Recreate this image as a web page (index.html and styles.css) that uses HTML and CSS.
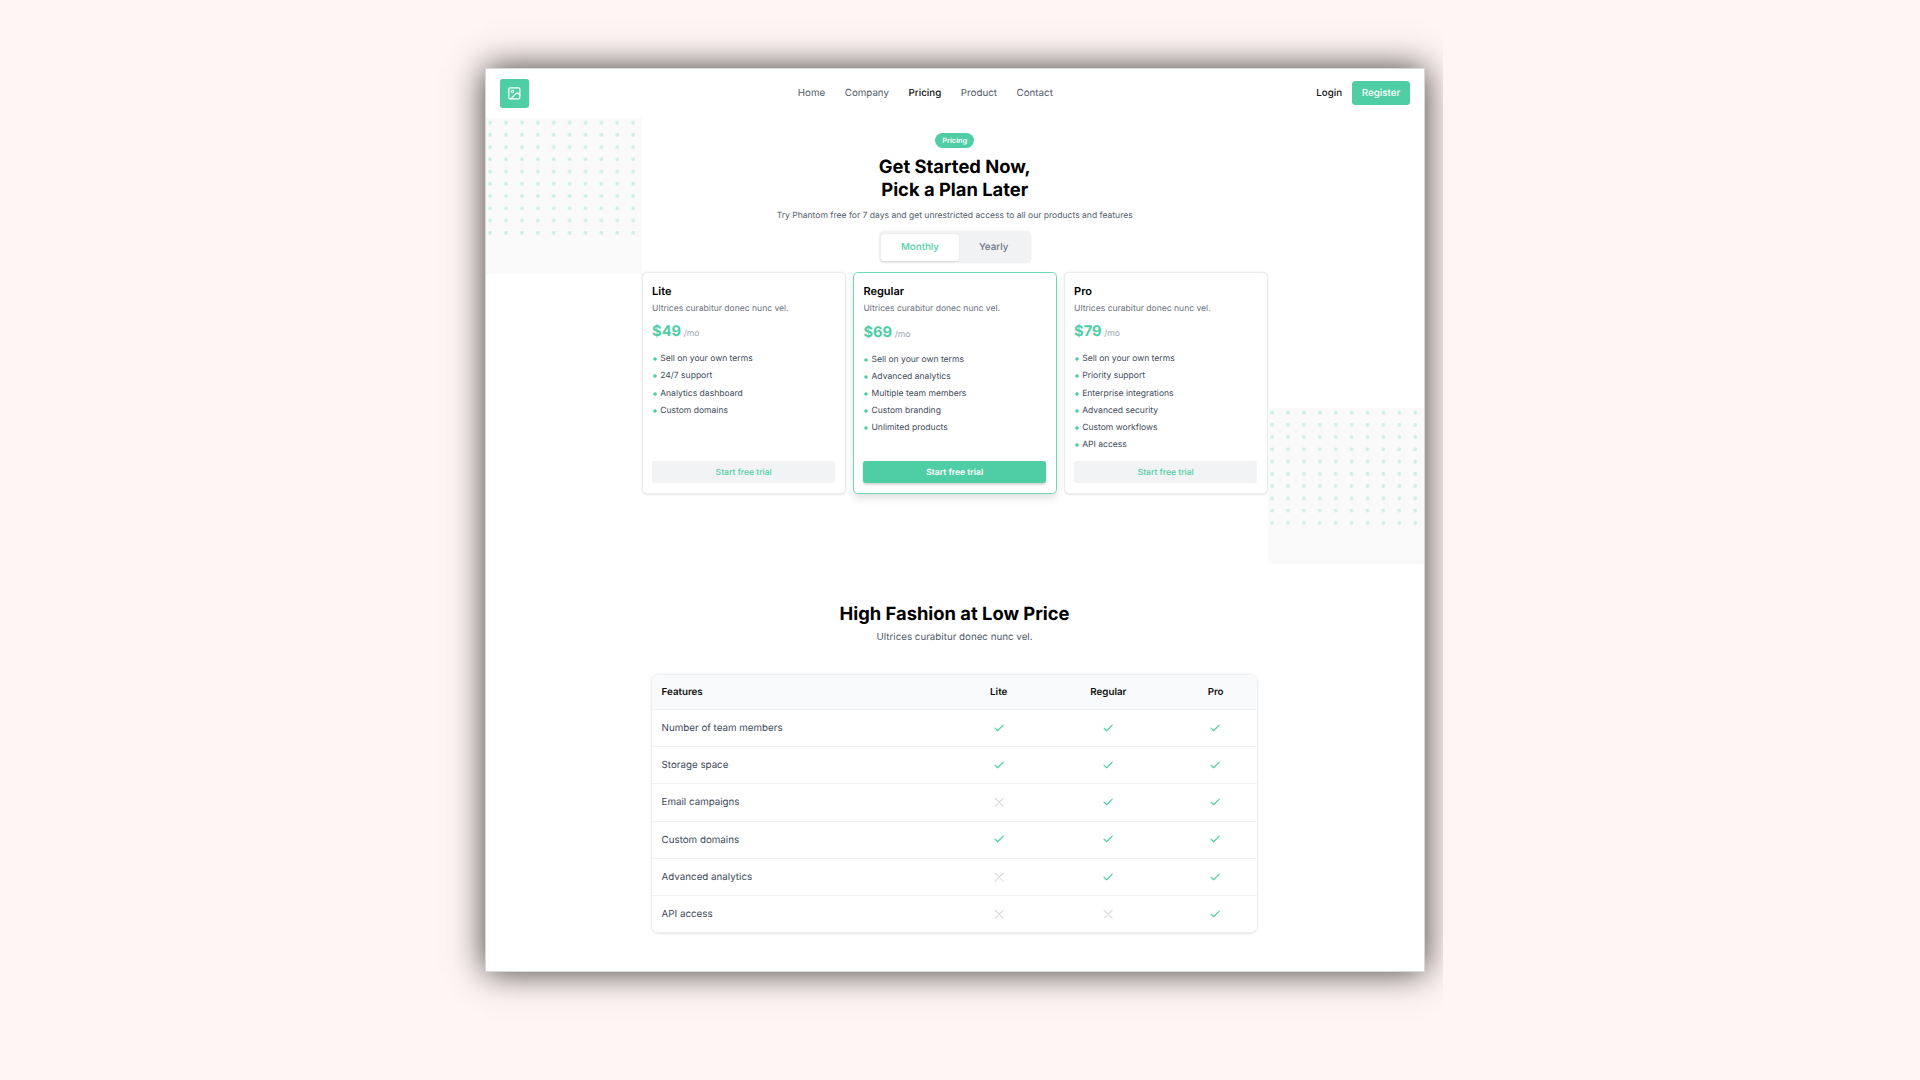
FILE: index.html
```html
<!DOCTYPE html>
<html lang="en">
<head>
<meta charset="utf-8">
<title>Pricing</title>
<link rel="stylesheet" href="styles.css">
</head>
<body>
<svg class="sprite" aria-hidden="true">
  <defs>
    <pattern id="dots" width="15.9" height="12.24" patternUnits="userSpaceOnUse">
      <ellipse cx="4.1" cy="4.7" rx="1.9" ry="2" fill="#cdf1e4"/>
    </pattern>
    <symbol id="check" viewBox="0 0 24 24"><path d="M20 6 9 17l-5-5" fill="none" stroke="#4fcea6" stroke-width="2.4" stroke-linecap="round" stroke-linejoin="round"/></symbol>
    <symbol id="cross" viewBox="0 0 24 24"><path d="M4 4 20 20M20 4 4 20" fill="none" stroke="#d1d5db" stroke-width="2" stroke-linecap="round"/></symbol>
  </defs>
</svg>
<div class="stage">
<div class="frame">
  <header class="header">
    <a class="logo">
      <svg viewBox="0 0 24 24" fill="none" stroke="#fff" stroke-width="1.9" stroke-linecap="round" stroke-linejoin="round"><rect x="3" y="3" width="18" height="18" rx="2"/><circle cx="9" cy="9" r="2"/><path d="m21 15-3.086-3.086a2 2 0 0 0-2.828 0L6 21"/></svg>
    </a>
    <nav class="nav"><a>Home</a><a>Company</a><a class="active">Pricing</a><a>Product</a><a>Contact</a></nav>
    <div class="actions"><a class="login">Login</a><a class="register">Register</a></div>
  </header>

  <section class="hero">
    <svg class="dots dots-left"><rect width="156" height="122" fill="url(#dots)"/></svg>
    <div class="pricing">
      <span class="badge">Pricing</span>
      <h1>Get Started Now,<br>Pick a Plan Later</h1>
      <p class="lead">Try Phantom free for 7 days and get unrestricted access to all our products and features</p>
      <div class="toggle"><span class="tab selected">Monthly</span><span class="tab">Yearly</span></div>
      <div class="cards">
        <article class="card">
          <h3>Lite</h3>
          <p class="desc">Ultrices curabitur donec nunc vel.</p>
          <p class="price">$49 <small>/mo</small></p>
          <ul><li>Sell on your own terms</li><li>24/7 support</li><li>Analytics dashboard</li><li>Custom domains</li></ul>
          <a class="cta">Start free trial</a>
        </article>
        <article class="card featured">
          <h3>Regular</h3>
          <p class="desc">Ultrices curabitur donec nunc vel.</p>
          <p class="price">$69 <small>/mo</small></p>
          <ul><li>Sell on your own terms</li><li>Advanced analytics</li><li>Multiple team members</li><li>Custom branding</li><li>Unlimited products</li></ul>
          <a class="cta">Start free trial</a>
        </article>
        <article class="card">
          <h3>Pro</h3>
          <p class="desc">Ultrices curabitur donec nunc vel.</p>
          <p class="price">$79 <small>/mo</small></p>
          <ul><li>Sell on your own terms</li><li>Priority support</li><li>Enterprise integrations</li><li>Advanced security</li><li>Custom workflows</li><li>API access</li></ul>
          <a class="cta">Start free trial</a>
        </article>
      </div>
    </div>
    <svg class="dots dots-right"><rect width="157" height="122" fill="url(#dots)"/></svg>
  </section>

  <section class="compare">
    <h2>High Fashion at Low Price</h2>
    <p class="sub">Ultrices curabitur donec nunc vel.</p>
    <div class="table">
      <div class="row head"><span>Features</span><span>Lite</span><span>Regular</span><span>Pro</span></div>
      <div class="row"><span>Number of team members</span><svg><use href="#check"/></svg><svg><use href="#check"/></svg><svg><use href="#check"/></svg></div>
      <div class="row"><span>Storage space</span><svg><use href="#check"/></svg><svg><use href="#check"/></svg><svg><use href="#check"/></svg></div>
      <div class="row"><span>Email campaigns</span><svg><use href="#cross"/></svg><svg><use href="#check"/></svg><svg><use href="#check"/></svg></div>
      <div class="row"><span>Custom domains</span><svg><use href="#check"/></svg><svg><use href="#check"/></svg><svg><use href="#check"/></svg></div>
      <div class="row"><span>Advanced analytics</span><svg><use href="#cross"/></svg><svg><use href="#check"/></svg><svg><use href="#check"/></svg></div>
      <div class="row"><span>API access</span><svg><use href="#cross"/></svg><svg><use href="#cross"/></svg><svg><use href="#check"/></svg></div>
    </div>
  </section>
</div>
</div>
</body>
</html>
```
FILE: styles.css
```css
* { box-sizing: border-box; }
body, h1, h2, h3, p, ul { margin: 0; padding: 0; }
body {
  background: #fff5f4;
  font-family: Inter, "Liberation Sans", sans-serif;
  font-size: 9.78px;
  line-height: 14.7px;
  color: #535d6a;
  text-rendering: geometricPrecision;
  overflow: hidden;
}
.sprite { display: block; width: 0; height: 0; }
.stage { width: 1443px; height: 1080px; padding: 68px 0 0 485px; overflow: hidden; }
.frame {
  width: 940px;
  height: 904px;
  background: #fff;
  border: 1px solid #dad8d8;
  box-shadow: 0 0 33px rgba(0, 0, 0, 0.76);
}

.header { display: flex; align-items: center; justify-content: space-between; height: 48.5px; padding: 0 14px 0 13.6px; }
.logo { display: grid; place-items: center; width: 29.3px; height: 29.3px; border-radius: 2.4px; background: #4fcea6; }
.logo svg { width: 14.7px; height: 14.7px; }
.nav { display: flex; gap: 19.6px; margin-left: 5.4px; padding-top: 1.6px; }
.nav .active { color: #111; font-weight: 500; }
.actions { display: flex; align-items: center; gap: 9.8px; font-weight: 500; }
.login { padding-top: 1.6px; color: #111; }
.register { padding: 5.7px 9.8px 4.1px; border-radius: 3.5px; background: #4fcea6; color: #fff; }

.hero { display: grid; grid-template-columns: 155.7px 626px 156.3px; height: 446.5px; }
.dots { display: block; width: 100%; height: 156.5px; background: #fafafa; }
.dots-right { align-self: end; }
.pricing { display: flex; flex-direction: column; align-items: center; padding-top: 15.5px; }
.badge { height: 15px; padding: 0 7.2px; border-radius: 8px; background: #4fcea6; color: #fff; font-size: 7.34px; font-weight: 600; line-height: 15px; }
h1 { margin-top: 8.2px; color: #000; font-size: 18.35px; font-weight: 700; line-height: 23.1px; text-align: center; }
.lead { margin-top: 7.7px; font-size: 8.56px; line-height: 12.2px; }
.toggle { display: flex; margin-top: 9px; padding: 2.4px; width: 152px; height: 32px; border-radius: 4.9px; background: #f1f2f4; box-shadow: 0 0 1.5px rgba(0, 0, 0, 0.12); }
.tab { flex: 1; display: grid; place-items: center; padding-top: 1.4px; color: #6b7280; font-weight: 500; }
.tab.selected { flex: 0 0 77.8px; border-radius: 3.5px; background: #fff; color: #4fcea6; box-shadow: 0 0.6px 1.5px rgba(0, 0, 0, 0.12); }

.cards { display: grid; grid-template-columns: 204px 204px 204px; justify-content: space-between; width: 626px; height: 221.2px; margin-top: 9.2px; }
.card { display: flex; flex-direction: column; padding: 9.4px; border: 1px solid #e9ebee; border-radius: 4.9px; background: #fff; box-shadow: 0 0.6px 1.8px rgba(0, 0, 0, 0.1); font-size: 8.56px; line-height: 12.23px; }
.featured { padding: 9.9px 9.7px 9.4px; border: 1.8px solid #6fd8b7; box-shadow: 0 5px 9px -1px rgba(0, 0, 0, 0.13); }
h3 { color: #000; font-size: 11px; font-weight: 600; line-height: 17.1px; }
.desc { margin-top: 2.8px; color: #6b7280; }
.price { margin-top: 7.2px; color: #4fcea6; font-size: 14.68px; font-weight: 700; line-height: 19.6px; }
.price small { margin-left: -0.9px; color: #9ca3af; font-size: 8.56px; font-weight: 400; }
ul { display: flex; flex-direction: column; gap: 4.9px; margin-top: 8.5px; list-style: none; }
li { display: flex; align-items: center; gap: 3.1px; color: #414b5a; }
li::before { content: ""; width: 4px; height: 4px; margin-left: 1px; background: radial-gradient(circle, #4fcea6 1.3px, transparent 2.1px); }
.cta { height: 22px; margin-top: auto; padding-top: 0.8px; border-radius: 2.4px; background: #f2f3f5; color: #4fcea6; font-weight: 500; line-height: 22px; text-align: center; }
.featured .cta { background: #4fcea6; color: #fff; font-weight: 600; box-shadow: 0 1.2px 2.4px rgba(0, 0, 0, 0.16); }

.compare { display: flex; flex-direction: column; align-items: center; padding: 38.9px 1px 0 0; }
h2 { color: #000; font-size: 18.35px; font-weight: 700; line-height: 22px; }
.sub { margin-top: 6.3px; }
.table { width: 607px; margin-top: 27.8px; border: 1px solid #eeeff1; border-radius: 7.3px; overflow: hidden; box-shadow: 0 0.6px 1.8px rgba(0, 0, 0, 0.1); }
.row { display: grid; grid-template-columns: 302.8px 87.8px 131.6px 82.8px; align-items: center; justify-items: center; height: 37.22px; border-top: 1px solid #f1f2f4; color: #414b5a; }
.row > span { padding-top: 2.6px; }
.row > :first-child { justify-self: start; padding-left: 9.6px; }
.row svg { width: 12.3px; height: 12.3px; }
.head { height: 34.2px; border-top: 0; background: #f9fafb; color: #111; font-weight: 600; }
```
